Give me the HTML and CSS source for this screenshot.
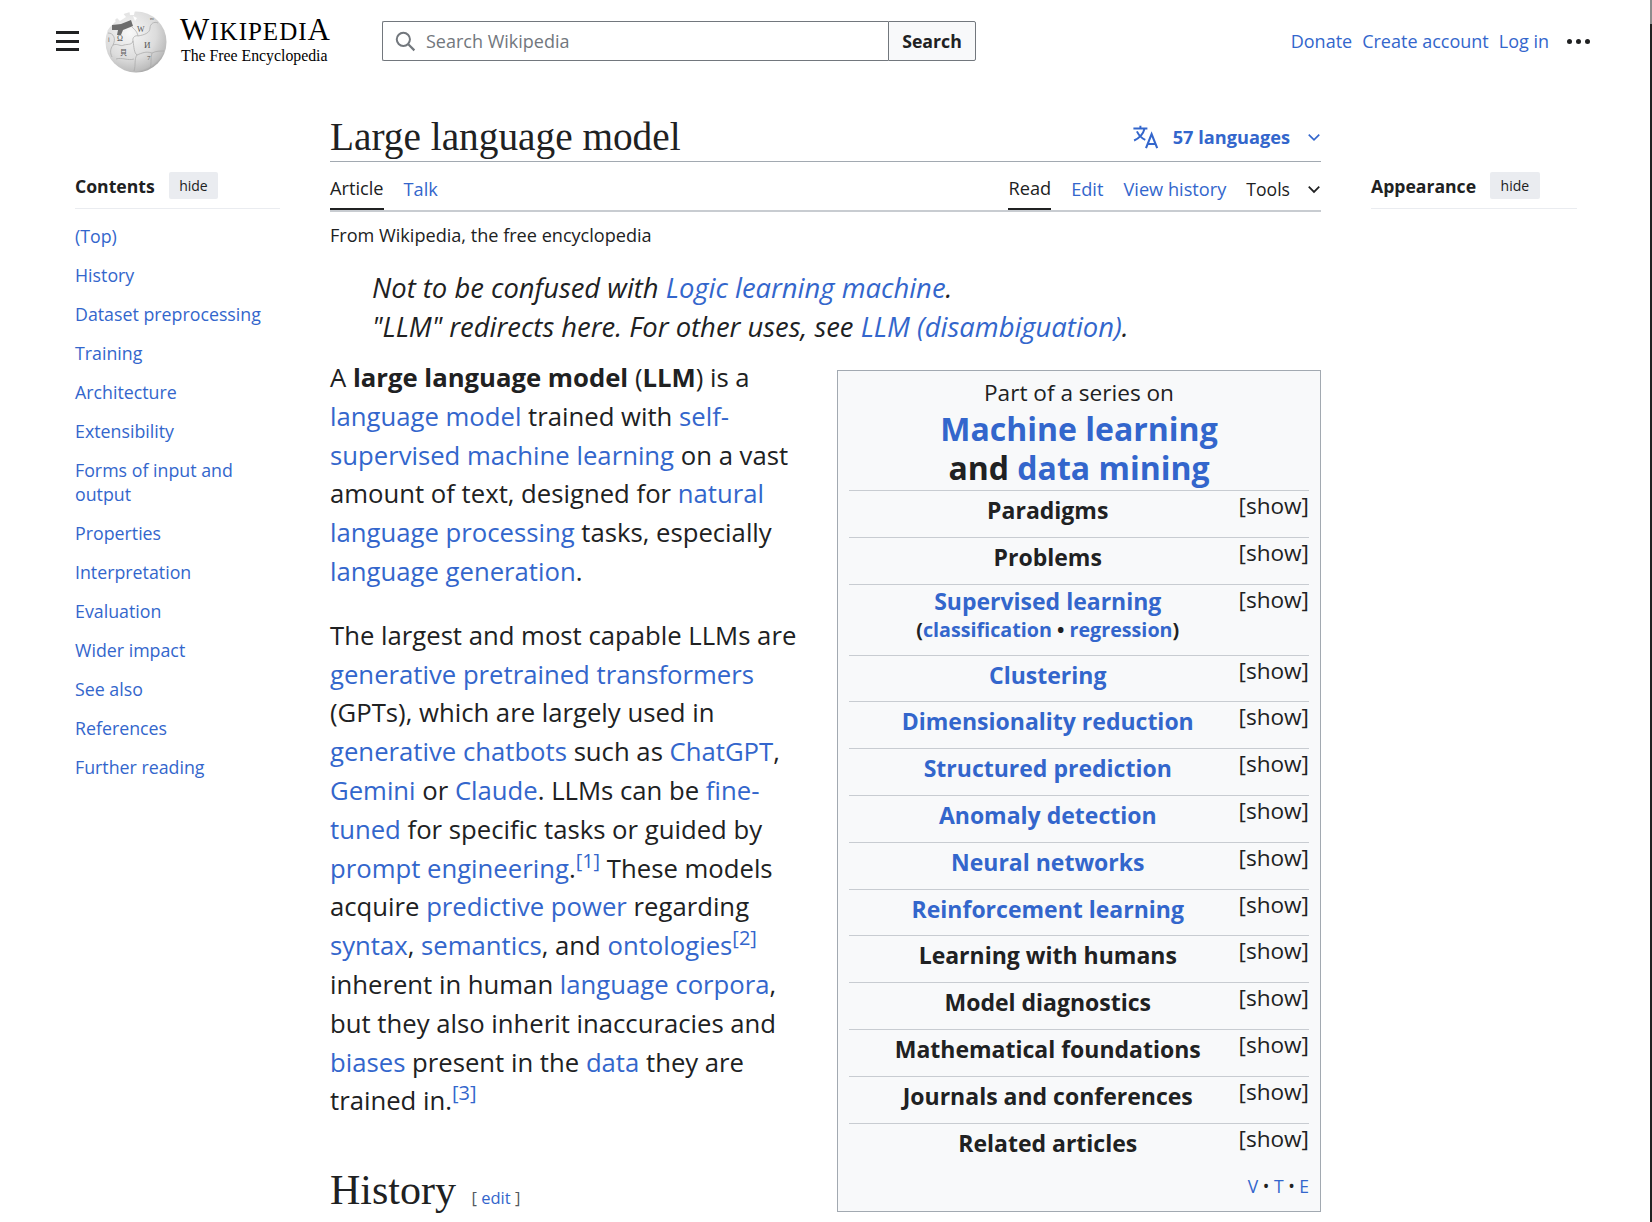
FILE: index.html
```html
<!DOCTYPE html>
<html lang="en">
<head>
    <meta charset="UTF-8">
    <meta name="viewport" content="width=device-width, initial-scale=1.0">
    <title>Large language model - Wikipedia</title>
    <link rel="stylesheet" href="styles.css">
</head>
<body>
    <div class="scrollbar"></div>
    <header class="site-header">
        <div class="menu-icon"><span></span><span></span><span></span></div>
        <svg class="globe" viewBox="0 0 64 64" width="64" height="64">
            <defs>
                <radialGradient id="globeShade" cx="0.4" cy="0.35" r="0.72">
                    <stop offset="0" stop-color="#f8f8f8"/>
                    <stop offset="0.6" stop-color="#dcdcdc"/>
                    <stop offset="0.88" stop-color="#bdbdbd"/>
                    <stop offset="1" stop-color="#8a8a8a"/>
                </radialGradient>
            </defs>
            <circle cx="32" cy="33" r="30.5" fill="url(#globeShade)"/>
            <path d="M4 24 C10 24 12 30 9 36 C6 40 6 44 8 48 M9 36 C14 34 16 38 20 36 C24 35 28 36 29 32 C28 28 32 26 34 27 C40 26 46 24 46 19 C46 15 50 12 54 14 M29 32 C30 38 30 44 33 46 C38 44 42 42 48 44 C52 42 56 42 60 42 M33 46 C30 50 32 56 30 62 M12 50 C18 48 24 52 30 50 M48 44 C46 50 48 56 46 59 M34 27 C33 22 30 20 28 18" fill="none" stroke="#a6a6a6" stroke-width="0.7"/>
            <path d="M8 16 L17 15 L27 11 L29 17 L19 21 L17 26 L13 26 L14 21 L8 21 Z" fill="#6d6d6d"/>
            <path d="M3 16 L9 10 L12 12 L9 15 L4 20 Z M13 4 L18 3 L22 8 L16 12 L13 9 Z M25 1 L31 1 L30 6 L26 6 Z M29 7 L33 9 L31 12 Z" fill="#fff"/>
            <g class="globe-letters">
                <text x="13" y="32" font-size="8">Ω</text>
                <text x="33" y="23" font-size="8">W</text>
                <text x="40" y="39" font-size="9">И</text>
                <text x="16" y="46" font-size="7">貝</text>
                <text x="43" y="51" font-size="7">7</text>
                <text x="4" y="33" font-size="6">ا</text>
                <text x="46" y="11" font-size="5">ю</text>
            </g>
        </svg>
        <div class="wordmark">
            <div class="wordmark-name">W<span>ikipedi</span>A</div>
            <div class="wordmark-tag">The Free Encyclopedia</div>
        </div>
        <form class="search">
            <div class="search-field">
                <svg viewBox="0 0 20 20" width="22" height="22"><circle cx="8.5" cy="8.5" r="6" fill="none" stroke="#72777d" stroke-width="1.8"/><path d="M13 13 L18.5 18.5" stroke="#72777d" stroke-width="2"/></svg>
                <span>Search Wikipedia</span>
            </div>
            <div class="search-btn">Search</div>
        </form>
        <nav class="user-links">
            <a href="#">Donate</a>
            <a href="#">Create account</a>
            <a href="#">Log in</a>
            <div class="dots"><span></span><span></span><span></span></div>
        </nav>
    </header>

    <div class="page">
        <aside class="toc">
            <div class="side-head"><strong>Contents</strong><span class="hide-btn">hide</span></div>
            <ul>
                <li><a href="#">(Top)</a></li>
                <li><a href="#">History</a></li>
                <li><a href="#">Dataset preprocessing</a></li>
                <li><a href="#">Training</a></li>
                <li><a href="#">Architecture</a></li>
                <li><a href="#">Extensibility</a></li>
                <li><a href="#">Forms of input and output</a></li>
                <li><a href="#">Properties</a></li>
                <li><a href="#">Interpretation</a></li>
                <li><a href="#">Evaluation</a></li>
                <li><a href="#">Wider impact</a></li>
                <li><a href="#">See also</a></li>
                <li><a href="#">References</a></li>
                <li><a href="#">Further reading</a></li>
            </ul>
        </aside>

        <main class="article">
            <div class="title-row">
                <h1>Large language model</h1>
                <div class="lang-btn">
                    <svg viewBox="0 0 20 20" width="28" height="28"><path d="M1 4 H11 M6 2 V4 M9 4 C8 8 5 11 1.5 12.5 M3.5 6 C5 9 7 11 9.5 12" fill="none" stroke="#36c" stroke-width="1.4"/><path d="M10 18 L14 8 L18 18 M11.4 15 H16.6" fill="none" stroke="#36c" stroke-width="1.5"/></svg>
                    <span>57 languages</span>
                    <svg class="chev" viewBox="0 0 12 12" width="14" height="14"><path d="M1.5 4 L6 8.5 L10.5 4" fill="none" stroke="#36c" stroke-width="1.4"/></svg>
                </div>
            </div>
            <div class="tabs">
                <div class="tab-group">
                    <a class="tab current" href="#">Article</a>
                    <a class="tab" href="#">Talk</a>
                </div>
                <div class="tab-group">
                    <a class="tab current" href="#">Read</a>
                    <a class="tab" href="#">Edit</a>
                    <a class="tab" href="#">View history</a>
                    <span class="tab tools">Tools <svg viewBox="0 0 12 12" width="14" height="14"><path d="M1.5 4 L6 8.5 L10.5 4" fill="none" stroke="#202122" stroke-width="1.5"/></svg></span>
                </div>
            </div>
            <div class="from">From Wikipedia, the free encyclopedia</div>
            <div class="hatnote">Not to be confused with <a href="#">Logic learning machine</a>.</div>
            <div class="hatnote">"LLM" redirects here. For other uses, see <a href="#">LLM (disambiguation)</a>.</div>

            <div class="infobox">
                <div class="ib-top">Part of a series on</div>
                <div class="ib-title"><a href="#">Machine learning</a><br>and <a href="#">data mining</a></div>
                <div class="ib-row"><div class="ib-name">Paradigms</div><span>[show]</span></div>
                <div class="ib-row"><div class="ib-name">Problems</div><span>[show]</span></div>
                <div class="ib-row tall"><div class="ib-name"><a href="#">Supervised learning</a><div class="ib-sub">(<a href="#">classification</a> • <a href="#">regression</a>)</div></div><span>[show]</span></div>
                <div class="ib-row"><div class="ib-name"><a href="#">Clustering</a></div><span>[show]</span></div>
                <div class="ib-row"><div class="ib-name"><a href="#">Dimensionality reduction</a></div><span>[show]</span></div>
                <div class="ib-row"><div class="ib-name"><a href="#">Structured prediction</a></div><span>[show]</span></div>
                <div class="ib-row"><div class="ib-name"><a href="#">Anomaly detection</a></div><span>[show]</span></div>
                <div class="ib-row"><div class="ib-name"><a href="#">Neural networks</a></div><span>[show]</span></div>
                <div class="ib-row"><div class="ib-name"><a href="#">Reinforcement learning</a></div><span>[show]</span></div>
                <div class="ib-row"><div class="ib-name">Learning with humans</div><span>[show]</span></div>
                <div class="ib-row"><div class="ib-name">Model diagnostics</div><span>[show]</span></div>
                <div class="ib-row"><div class="ib-name">Mathematical foundations</div><span>[show]</span></div>
                <div class="ib-row"><div class="ib-name">Journals and conferences</div><span>[show]</span></div>
                <div class="ib-row"><div class="ib-name">Related articles</div><span>[show]</span></div>
                <div class="ib-vte"><a href="#">V</a> • <a href="#">T</a> • <a href="#">E</a></div>
            </div>

            <p>A <b>large language model</b> (<b>LLM</b>) is a<br>
            <a href="#">language model</a> trained with <a href="#">self-<br>supervised machine learning</a> on a vast<br>
            amount of text, designed for <a href="#">natural<br>language processing</a> tasks, especially<br>
            <a href="#">language generation</a>.</p>

            <p>The largest and most capable LLMs are<br>
            <a href="#">generative pretrained transformers</a><br>
            (GPTs), which are largely used in<br>
            <a href="#">generative chatbots</a> such as <a href="#">ChatGPT</a>,<br>
            <a href="#">Gemini</a> or <a href="#">Claude</a>. LLMs can be <a href="#">fine-<br>tuned</a> for specific tasks or guided by<br>
            <a href="#">prompt engineering</a>.<sup><a href="#">[1]</a></sup> These models<br>
            acquire <a href="#">predictive power</a> regarding<br>
            <a href="#">syntax</a>, <a href="#">semantics</a>, and <a href="#">ontologies</a><sup><a href="#">[2]</a></sup><br>
            inherent in human <a href="#">language corpora</a>,<br>
            but they also inherit inaccuracies and<br>
            <a href="#">biases</a> present in the <a href="#">data</a> they are<br>
            trained in.<sup><a href="#">[3]</a></sup></p>

            <h2>History <span class="edit">[ <a href="#">edit</a> ]</span></h2>
        </main>

        <aside class="appearance">
            <div class="side-head"><strong>Appearance</strong><span class="hide-btn">hide</span></div>
        </aside>
    </div>
</body>
</html>
```

FILE: styles.css
```css
html, body {
    height: 1222px;
    overflow: hidden;
}

body {
    margin: 0;
    font-family: "Open Sans", "Noto Sans", sans-serif;
    color: #202122;
    background: #fff;
}

a {
    color: #36c;
    text-decoration: none;
}

.scrollbar {
    position: fixed;
    top: 0;
    right: 0;
    width: 2px;
    height: 100%;
    background: #222;
    border-top: 24px solid #8c8c8c;
}

.site-header {
    display: flex;
    align-items: center;
    height: 82px;
    padding-left: 56px;
    padding-right: 62px;
}

.menu-icon {
    display: flex;
    flex-direction: column;
    gap: 5.5px;
    width: 23px;
    margin-right: 25px;
}

.menu-icon span {
    height: 3px;
    background: #202122;
}

.globe {
    flex: none;
    margin-right: 12px;
}

.globe-letters text {
    font-family: "Liberation Serif", "Noto Sans CJK SC", serif;
    fill: #555;
}

.wordmark {
    width: 202px;
    font-family: "Liberation Serif", serif;
    color: #000;
}

.wordmark-name {
    font-size: 31px;
    line-height: 28px;
    letter-spacing: 1px;
    margin-top: -2px;
}

.wordmark-name span {
    font-size: 25px;
    text-transform: uppercase;
}

.wordmark-tag {
    margin-left: 1px;
    margin-top: 1px;
    font-size: 15.8px;
    line-height: 18px;
}

.search {
    display: flex;
    width: 594px;
    height: 40px;
    font-size: 18px;
}

.search-field {
    flex: 1;
    display: flex;
    align-items: center;
    gap: 10px;
    padding-left: 11px;
    border: 1px solid #72777d;
    border-right: none;
    border-radius: 2px 0 0 2px;
    color: #72777d;
}

.search-btn {
    display: flex;
    align-items: center;
    justify-content: center;
    width: 86px;
    border: 1px solid #72777d;
    border-radius: 0 2px 2px 0;
    font-weight: 700;
    font-size: 17.7px;
    color: #202122;
    background: #f8f9fa;
}

.user-links {
    display: flex;
    align-items: center;
    gap: 10px;
    margin-left: auto;
    font-size: 18px;
}

.dots {
    display: flex;
    gap: 4px;
    margin-left: 8px;
}

.dots span {
    width: 5px;
    height: 5px;
    border-radius: 50%;
    background: #202122;
}

.page {
    display: grid;
    grid-template-columns: 205px 991px 206px;
    column-gap: 50px;
    padding-left: 75px;
}

.toc,
.appearance {
    padding-top: 86px;
}

.side-head {
    display: flex;
    align-items: center;
    gap: 14px;
    height: 35px;
    border-bottom: 1px solid #eaecf0;
    font-size: 17.6px;
    padding-bottom: 4.5px;
}

.hide-btn {
    padding: 0 10.5px;
    height: 27px;
    line-height: 27px;
    border-radius: 2px;
    font-size: 14px;
    background: #eaecf0;
}

.toc ul {
    margin: 8px 0 0;
    padding: 0;
    list-style: none;
    font-size: 17.8px;
    line-height: 24px;
}

.toc li {
    padding: 7.5px 0;
}

.title-row {
    display: flex;
    align-items: center;
    justify-content: space-between;
    height: 79px;
    border-bottom: 1px solid #a2a9b1;
}

h1 {
    margin: 0;
    padding-top: 30px;
    font-family: "Liberation Serif", serif;
    font-size: 39.3px;
    font-weight: 400;
}

.lang-btn {
    display: flex;
    align-items: center;
    padding-top: 30px;
    font-size: 18.2px;
    font-weight: 700;
    color: #36c;
}

.lang-btn span {
    margin: 0 17px 0 13px;
}

.tabs {
    display: flex;
    justify-content: space-between;
    border-bottom: 2px solid #c8ccd1;
    height: 48px;
    font-size: 18.2px;
}

.tab-group {
    display: flex;
    gap: 20px;
}

.tab {
    display: flex;
    align-items: center;
    height: 48px;
    box-sizing: border-box;
    padding-top: 6px;
}

.tab.current {
    color: #202122;
    border-bottom: 2px solid #202122;
}

.tools {
    gap: 17px;
    font-size: 17.6px;
}

.from {
    margin-top: 10px;
    font-size: 18.1px;
    line-height: 26px;
}

.hatnote {
    padding-left: 42px;
    font-style: italic;
    font-size: 27.4px;
    line-height: 39px;
}

.from + .hatnote {
    margin-top: 20px;
}

.article p {
    margin: 0 0 25px;
    font-size: 25.7px;
    line-height: 38.8px;
}

.article p:first-of-type {
    margin-top: 13px;
}

sup {
    font-size: 20px;
    line-height: 0;
}

h2 {
    margin: 45px 0 0;
    font-family: "Liberation Serif", serif;
    font-size: 42px;
    font-weight: 400;
}

.edit {
    font-family: "Open Sans", sans-serif;
    font-size: 16.5px;
    margin-left: 5px;
    color: #54595d;
}

.infobox {
    float: right;
    width: 484px;
    box-sizing: border-box;
    margin-top: 24px;
    height: 842px;
    padding: 7px 11px 0;
    border: 1px solid #a2a9b1;
    background: #f8f9fa;
    font-size: 22.6px;
}

.ib-top {
    text-align: center;
    line-height: 30px;
}

.ib-title {
    text-align: center;
    font-size: 32px;
    font-weight: 700;
    line-height: 39px;
    margin: 1px 0 3px;
}

.ib-row {
    display: flex;
    height: 46.8px;
    box-sizing: border-box;
    border-top: 1.5px solid #c8ccd1;
}

.ib-row.tall {
    height: 71px;
}

.ib-name {
    flex: 1;
    padding-left: 8px;
    text-align: center;
    font-size: 23px;
    font-weight: 700;
    line-height: 38px;
}

.ib-row.tall .ib-name {
    line-height: 32px;
}

.ib-row.tall .ib-sub {
    font-size: 19.7px;
    line-height: 26px;
}

.ib-row > span {
    line-height: 30px;
}

.ib-vte {
    margin-top: 5px;
    text-align: right;
    font-size: 17.5px;
}
```
